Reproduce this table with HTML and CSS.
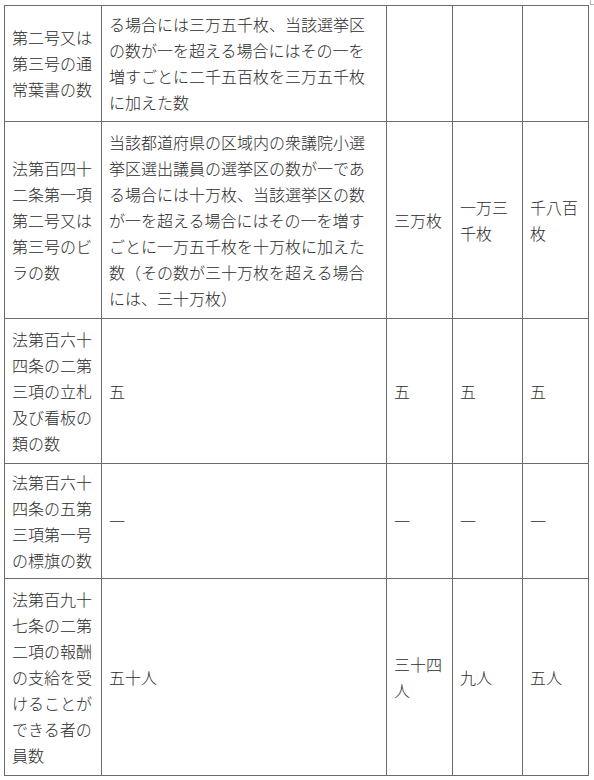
FILE: index.html
```html
<!DOCTYPE html>
<html lang="ja">
<head>
<meta charset="utf-8">
<title>表</title>
<link rel="stylesheet" href="styles.css">
</head>
<body>
<span class="corner-mark"></span>
<table class="law-table">
  <colgroup>
    <col class="c-label">
    <col class="c-rule">
    <col class="c-a">
    <col class="c-b">
    <col class="c-c">
  </colgroup>
  <tbody>
    <tr class="row-first">
      <td>第二号又は第三号の通常葉書の数</td>
      <td>る場合には三万五千枚、当該選挙区の数が一を超える場合にはその一を増すごとに二千五百枚を三万五千枚に加えた数</td>
      <td></td>
      <td></td>
      <td></td>
    </tr>
    <tr>
      <td>法第百四十二条第一項第二号又は第三号のビラの数</td>
      <td>当該都道府県の区域内の衆議院小選挙区選出議員の選挙区の数が一である場合には十万枚、当該選挙区の数が一を超える場合にはその一を増すごとに一万五千枚を十万枚に加えた数（その数が三十万枚を超える場合には、三十万枚）</td>
      <td>三万枚</td>
      <td>一万三千枚</td>
      <td>千八百枚</td>
    </tr>
    <tr>
      <td>法第百六十四条の二第三項の立札及び看板の類の数</td>
      <td>五</td>
      <td>五</td>
      <td>五</td>
      <td>五</td>
    </tr>
    <tr class="row-short">
      <td>法第百六十四条の五第三項第一号の標旗の数</td>
      <td>一</td>
      <td>一</td>
      <td>一</td>
      <td>一</td>
    </tr>
    <tr>
      <td>法第百九十七条の二第二項の報酬の支給を受けることができる者の員数</td>
      <td>五十人</td>
      <td>三十四人</td>
      <td>九人</td>
      <td>五人</td>
    </tr>
  </tbody>
</table>
</body>
</html>
```

FILE: styles.css
```css
html, body {
  margin: 0;
  padding: 0;
  background: #ffffff;
}

body {
  position: relative;
  padding: 5px 0 0 4px;
  font-family: "Noto Sans CJK JP Light", "Noto Sans CJK JP DemiLight", "Noto Sans CJK JP", "Noto Sans CJK SC", sans-serif;
  font-weight: 300;
  font-size: 16px;
  line-height: 26px;
  color: #2b2b2b;
}

.corner-mark {
  position: absolute;
  top: 0;
  left: 590px;
  width: 4px;
  height: 4px;
  border-left: 1px solid #b8b8b8;
  border-bottom: 1px solid #b8b8b8;
}

.law-table {
  border-collapse: collapse;
  table-layout: fixed;
  width: 585px;
}

.c-label { width: 97px; }
.c-rule { width: 285px; }
.c-a { width: 66px; }
.c-b { width: 70px; }
.c-c { width: 66px; }

.law-table td {
  border: 1px solid #6b6b6b;
  padding: 7px 6px 7px 7px;
  vertical-align: middle;
  word-break: break-all;
  line-break: strict;
}

.row-first td {
  padding-top: 5px;
  padding-bottom: 6px;
}

.row-short td {
  padding-top: 5px;
  padding-bottom: 5px;
}
```
